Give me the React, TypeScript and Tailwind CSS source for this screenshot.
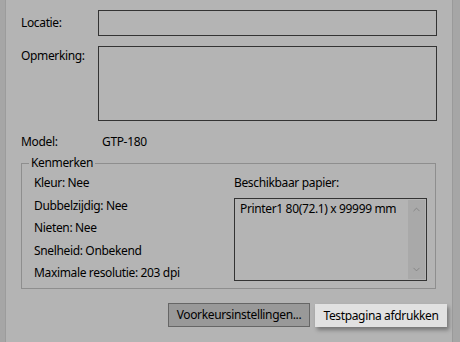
import { ChevronUp, ChevronDown } from "lucide-react";

const font = { fontFamily: '"Segoe UI", "Noto Sans", sans-serif' };

function App() {
  return (
    <div
      className="w-[460px] h-[342px] flex bg-[#b4b4b4] text-[12px] tracking-[-0.35px] text-black overflow-hidden"
      style={font}
    >
      {/* linker rand */}
      <div className="w-[6px] h-full bg-[#a6a6a6] border-r border-[#9c9c9c]" />

      <div className="flex-1 flex flex-col pl-[15px]">
        {/* Locatie */}
        <div className="flex mt-[10px] h-[26px]">
          <div className="w-[77px] pt-[5px] leading-[16px]">Locatie:</div>
          <div className="w-[339px] h-[26px] border border-[#333333]" />
        </div>

        {/* Opmerking */}
        <div className="flex mt-[10px]">
          <div className="w-[77px] pt-[2px] leading-[16px]">Opmerking:</div>
          <div className="w-[339px] h-[75px] border border-[#333333]" />
        </div>

        {/* Model */}
        <div className="flex mt-[13px] leading-[16px]">
          <div className="w-[81px]">Model:</div>
          <div>GTP-180</div>
        </div>

        {/* Kenmerken */}
        <fieldset className="mt-[5px] w-[415px] h-[134px] border border-[#8e8e8e] px-0">
          <legend className="ml-[7px] px-[2px] leading-[16px]">Kenmerken</legend>
          <div className="flex pl-[12px] pt-[4px]">
            <div className="w-[200px] flex flex-col leading-[16px] gap-[6.5px]">
              <div>Kleur: Nee</div>
              <div>Dubbelzijdig: Nee</div>
              <div>Nieten: Nee</div>
              <div>Snelheid: Onbekend</div>
              <div>Maximale resolutie: 203 dpi</div>
            </div>
            <div className="flex flex-col">
              <div className="leading-[16px]">Beschikbaar papier:</div>
              <div className="mt-[7px] w-[193px] h-[83px] border border-[#333333] flex">
                <div className="flex-1 pl-[5px] pt-[2px] leading-[16px]">
                  Printer1 80(72.1) x 99999 mm
                </div>
                <div className="w-[17px] my-[1px] mr-[1px] bg-[#a9a9a9] flex flex-col justify-between items-center py-[4px]">
                  <ChevronUp size={11} strokeWidth={1.6} color="#7a7a7a" />
                  <ChevronDown size={11} strokeWidth={1.6} color="#7a7a7a" />
                </div>
              </div>
            </div>
          </div>
        </fieldset>

        {/* knoppen */}
        <div className="flex justify-end gap-[5px] mt-[14px] w-[426px]">
          <button
            type="button"
            className="w-[142px] h-[24px] bg-[#999999] border border-[#666666] leading-[16px]"
          >
            Voorkeursinstellingen...
          </button>
          <button
            type="button"
            className="mt-[1px] w-[132px] h-[23px] bg-[#e1e1e1] leading-[16px] shadow-[2px_3px_4px_rgba(0,0,0,0.35)]"
          >
            Testpagina afdrukken
          </button>
        </div>
      </div>

      {/* rechter rand */}
      <div className="w-[8px] h-full bg-[#a6a6a6] border-l border-[#9a9a9a]" />
    </div>
  );
}

export default App;
